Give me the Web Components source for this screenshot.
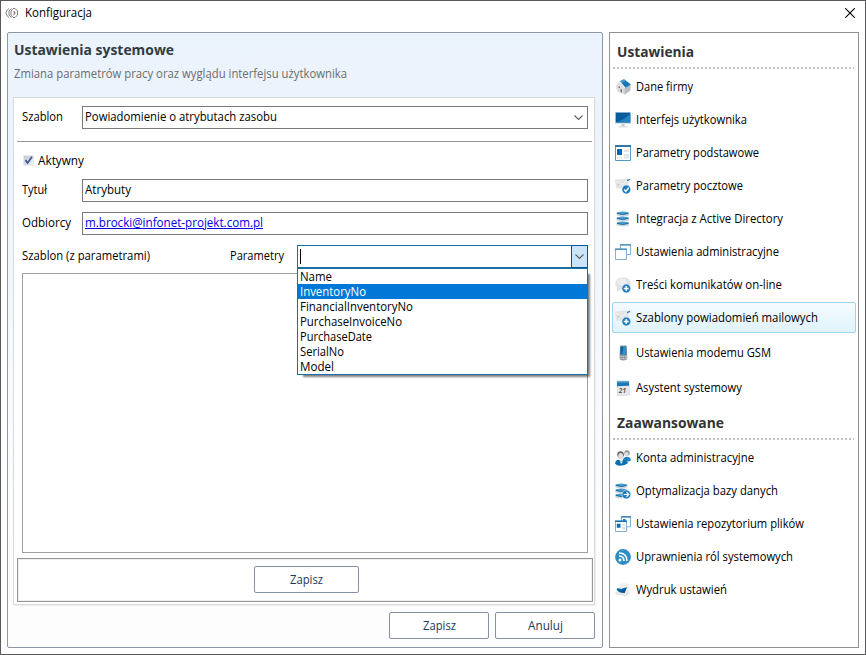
<!DOCTYPE html>
<html lang="pl">
<head>
<meta charset="utf-8">
<title>Konfiguracja</title>
<style>
    html, body {
        margin: 0;
        height: 100%;
        overflow: hidden;
    }
    body {
        --line: #7a7a7a;
        --accent: #0078d7;
        font-family: "Open Sans", "Noto Sans", sans-serif;
        font-size: 12px;
        color: #000;
    }
</style>
</head>
<body>
<config-window>
    <settings-panel></settings-panel>
    <side-menu>
        <menu-heading w="77">Ustawienia</menu-heading>
        <menu-item icon="house" w="57">Dane firmy</menu-item>
        <menu-item icon="monitor" w="111">Interfejs użytkownika</menu-item>
        <menu-item icon="form" w="123">Parametry podstawowe</menu-item>
        <menu-item icon="mailcheck" w="107">Parametry pocztowe</menu-item>
        <menu-item icon="database" w="147">Integracja z Active Directory</menu-item>
        <menu-item icon="windows" w="143">Ustawienia administracyjne</menu-item>
        <menu-item icon="chatadd" w="146">Treści komunikatów on-line</menu-item>
        <menu-item icon="mailadd" w="182" class="selected">Szablony powiadomień mailowych</menu-item>
        <menu-item icon="phone" w="135" class="tall">Ustawienia modemu GSM</menu-item>
        <menu-item icon="calendar" w="106" class="tall">Asystent systemowy</menu-item>
        <menu-heading w="107">Zaawansowane</menu-heading>
        <menu-item icon="users" w="118">Konta administracyjne</menu-item>
        <menu-item icon="dbnext" w="142">Optymalizacja bazy danych</menu-item>
        <menu-item icon="repo" w="168">Ustawienia repozytorium plików</menu-item>
        <menu-item icon="feed" w="157">Uprawnienia ról systemowych</menu-item>
        <menu-item icon="printer" w="91">Wydruk ustawień</menu-item>
    </side-menu>
</config-window>

<script>
const badge = '<circle cx="11.3" cy="11.5" r="4.4" fill="#1f7dbd" stroke="#eaf3f9" stroke-width=".6"/>'
const mail = '<path d="M0 1.500l13-1 1 10H1z" fill="#e4e4e6"/><path d="M1 3l6 3.500 5-4.500" fill="none" stroke="#f4f4f4"/><path d="M2.500 7l2-1" stroke="#c2c2c6"/><path d="M12 2.700l3-1.300" stroke="#3d7daa" stroke-width="1.400"/>'
const disks = (x, w) => [0, 5, 10].map(y => `
    <path d="M${x} ${y + 1.5}v3q${w / 2} 2.200 ${w} 0v-3z" fill="#d3d7da"/>
    <ellipse cx="${x + w / 2}" cy="${y + 2}" rx="${w / 2 - .3}" ry="1.5" fill="#4b9fcd"/>
    <path d="M${x + .5} ${y + 2.4}q${w / 2 - .5} 2.2 ${w - 1} 0" fill="none" stroke="#136ba6" stroke-width="1"/>`).join('')

const icons = {
    house: '<path d="M1 6.500L4.700 2.500 10 8v7.800L2 12.300z" fill="#dcdcdc"/><path d="M9.500 8.500l4.300-3 1.700 1v5L9.500 15.800z" fill="#b9bdc0"/><path d="M4.500 2.500L9 .2l7 5.300-6 3.500z" fill="#1a75b5"/><path d="M4.500 2.500L9 .2l2 1.500-4.800 2.600z" fill="#4a9bcc"/><path d="M.3 7l4.200-4.300L10 9" fill="none" stroke="#efefef" stroke-width="1.200"/><path d="M3.500 7.500h1.500v1.500H3.500zM5.500 10l1.500.6v2.900l-1.500-.6z" fill="#777"/>',
    monitor: '<path d="M0 0h16v12H0z" fill="#dde2e6"/><path d="M.7.6h14.600v10H.7z" fill="#095d9e"/><path d="M.7 10.600C6 9 11 6 15.300 2v8.600z" fill="#2583bf"/><path d="M6.500 12h3v2h-3z" fill="#c8cbcd"/><path d="M4 14h8l1 1.400H3z" fill="#dcdfe1"/>',
    form: '<path d="M.5.8h15v14.700H.5z" fill="#fff" stroke="#5499bf"/><path d="M0 0h16v2H0z" fill="#3179a6"/><path d="M2 4h5v6H2z" fill="#0a67ad"/><path d="M9 4.500h5V7H9zM9 9h5v4.500H9zM2 12h5v1.600H2z" fill="#e4e6e7"/>',
    mailcheck: mail + badge + '<path d="M9.200 11.500l1.600 1.900 2.900-3.600" fill="none" stroke="#fff" stroke-width="1.400"/>',
    mailadd: mail + badge + '<path d="M8.800 11.500h5M11.300 9v5" stroke="#fff" stroke-width="1.600"/>',
    chatadd: '<ellipse cx="8" cy="6.500" rx="7.700" ry="6.200" fill="#e2e2e4"/><ellipse cx="7" cy="5" rx="5" ry="3.500" fill="#ededee"/><path d="M2 10v4.500l5-2.500z" fill="#dedee0"/>' + badge + '<path d="M8.800 11.500h5M11.300 9v5" stroke="#fff" stroke-width="1.600"/>',
    database: disks(1.5, 12.5),
    dbnext: disks(.3, 12) + badge + '<path d="M8.600 11.500h5M11.500 9.200l2.200 2.300-2.200 2.300" fill="none" stroke="#fff" stroke-width="1.200"/>',
    windows: '<path d="M5.500.8h10v9.700h-10z" fill="#fff" stroke="#7fb2d0"/><path d="M5 .3h11v1.200H5z" fill="#3b86b2"/><path d="M.5 5.300h11v10.200H.5z" fill="#fff" stroke="#7fb2d0"/><path d="M0 4.500h12v1.300H0z" fill="#3b86b2"/>',
    repo: '<path d="M6.500.8h9v10h-9z" fill="#fff" stroke="#7fb2d0"/><path d="M6 .3h10v1.300H6zM8 3h2.500v3H8z" fill="#2578ac"/><path d="M.5 5.300h11v10.200H.5z" fill="#fff" stroke="#7fb2d0"/><path d="M0 4.500h12v1.400H0zM1.800 7.700h3.700v4H1.800z" fill="#116fae"/><path d="M7 8h3v1.500H7zM7 11h3v2.500H7z" fill="#dfe3e5"/>',
    phone: '<path d="M5 .5h6.500l.8 13q-.3 1.800-4 2-3.500-.2-3.800-2z" fill="#969a9d"/><path d="M5.500 1.500h5.700l.3 8H5.300z" fill="#0b65a5"/><path d="M8.500 1.500h2.700l.3 8H7z" fill="#3a8ec3"/><path d="M5.500 11h6v3h-6z" fill="#c2c5c8"/><path d="M7 11v3M9.500 11v3M5.500 12.500h6" stroke="#888" stroke-width=".6"/>',
    calendar: '<path d="M2 1h12l.5 14-12 .5z" fill="#e9e9ea" stroke="#ccc" stroke-width=".6"/><path d="M2 1h12v4.700L2 6.200z" fill="#1a78b8"/><path d="M2 1h12v1.500H2z" fill="#62a8d3"/><text x="3.800" y="12.500" font-family="Open Sans" font-style="italic" font-weight="700" font-size="6.500" fill="#555">21</text>',
    users: '<circle cx="12" cy="3" r="2.700" fill="#8b9499"/><circle cx="11.600" cy="4" r="1.900" fill="#dedede"/><path d="M8 10q1-3.500 4-3.300 3.500 0 4 3.800-3 2-8 0z" fill="#2481bb"/><path d="M2.200 5Q2 1.300 5.500 1.200 9 1 9 5L7.800 8H3.500z" fill="#5f686d"/><ellipse cx="5.700" cy="6.300" rx="2.400" ry="3.200" fill="#dfdddc"/><path d="M0 13.500q.5-4 4-3.800l2 1.800 2-1.800q4 .2 5 3.300-3 2.800-8 2.700-3.500 0-5-2.200z" fill="#0870af"/><path d="M4.500 9.800L6 12l1.500-2.200v2.700L6 14z" fill="#d7e5ee"/>',
    feed: '<circle cx="8" cy="8" r="7.900" fill="#318cc3"/><circle cx="5" cy="11" r="1.500" fill="#fff"/><path d="M4 7q4.800.1 5 5M4 4q7.800 0 8 8" fill="none" stroke="#fff" stroke-width="1.600"/>',
    printer: '<path d="M5 1.500h8l2.500 6-3 4H3z" fill="#f0f0f1"/><path d="M0 10.500L4 9l10 1 1.500 2L11 14.500 1 12.500z" fill="#e6e6e8"/><path d="M2 6.500q2-.500 4 .5 3-1.800 6-1.500L9.500 11 4 10 1.700 8z" fill="#0d6cae"/><path d="M4 10q4-2 7.500-4.300L9.500 11z" fill="#08568f"/>',
    logo: '<path d="M4 1.500L2.300 3 .8 6l1.500 3L4 10.500M6.500 1.500L4 4v4l2.500 2.500M8 1.500h2L12.500 4v4L10 10.500H8M7.500 2L6 4v4l1.500 2" fill="none" stroke="#827c80" stroke-width="1"/><path d="M8.500 4.200L10 6 8.500 7.800" fill="none" stroke="#a5536d" stroke-width="1.100"/>'
}

/* text run condensed to a given pixel width */
class FitText extends HTMLElement {
    constructor() {
        super()
        this.attachShadow({ mode: 'open' })
    }
    connectedCallback() {
        this.shadowRoot.innerHTML = `
            <style>
                :host { display: block; flex: none; white-space: nowrap; }
                span { display: inline-block; transform-origin: 0 50%; }
            </style>
            <span><slot></slot></span>
        `
        const w = Number(this.getAttribute('w'))
        if (!w) return
        const span = this.shadowRoot.querySelector('span')
        const natural = span.getBoundingClientRect().width
        span.style.transform = `scaleX(${w / natural})`
        this.style.width = w + 'px'
    }
}

class AppIcon extends HTMLElement {
    constructor() {
        super()
        this.attachShadow({ mode: 'open' })
    }
    connectedCallback() {
        this.shadowRoot.innerHTML = `
            <style>
                :host { display: block; flex: none; width: 16px; height: 16px; }
                svg { display: block; }
            </style>
            <svg width="16" height="16" viewBox="0 0 16 16">${icons[this.getAttribute('name')]}</svg>
        `
    }
}

class ConfigWindow extends HTMLElement {
    constructor() {
        super()
        this.attachShadow({ mode: 'open' })
        this.shadowRoot.innerHTML = `
            <style>
                :host {
                    display: flex;
                    flex-direction: column;
                    box-sizing: border-box;
                    width: 866px;
                    height: 655px;
                    border: 1px solid #58585b;
                    background: #fff;
                }
                header {
                    display: flex;
                    align-items: center;
                    box-sizing: border-box;
                    height: 24px;
                    padding: 0 10px 1px 4px;
                    margin-bottom: 7px;
                }
                header app-icon { margin: 5px 4px 0 0; }
                .close { margin: 1px 0 0 auto; }
                main {
                    display: flex;
                    gap: 6px;
                    height: 616px;
                    padding-left: 6px;
                }
            </style>
            <header>
                <app-icon name="logo"></app-icon>
                <fit-text w="67">Konfiguracja</fit-text>
                <svg class="close" width="10" height="10"><path d="M.3.300l9.400 9.400M9.700.300L.3 9.700" stroke="#000" stroke-width="1.100"/></svg>
            </header>
            <main><slot></slot></main>
        `
    }
}

class PushButton extends HTMLElement {
    constructor() {
        super()
        this.attachShadow({ mode: 'open' })
        this.shadowRoot.innerHTML = `
            <style>
                :host {
                    display: flex;
                    align-items: center;
                    justify-content: center;
                    box-sizing: border-box;
                    width: 100px;
                    height: 27px;
                    border: 1px solid #8392a8;
                    border-radius: 2px;
                    background: #fff;
                    color: #1e395b;
                }
            </style>
            <slot></slot>
        `
    }
}

class TextField extends HTMLElement {
    constructor() {
        super()
        this.attachShadow({ mode: 'open' })
        const combo = this.hasAttribute('combo')
        this.shadowRoot.innerHTML = `
            <style>
                :host {
                    display: flex;
                    align-items: center;
                    justify-content: space-between;
                    box-sizing: border-box;
                    height: 23px;
                    padding-left: 2px;
                    border: 1px solid var(--line);
                    background: #fff;
                }
                :host([open]) { border-color: #1a6fa8; }
                ::slotted(fit-text) { margin-top: -2px; }
                .arrow {
                    display: flex;
                    align-items: center;
                    justify-content: center;
                    width: 17px;
                    height: 23px;
                    box-sizing: border-box;
                }
                :host([open]) .arrow {
                    background: #cce4f7;
                    border: 1px solid #005499;
                    margin-right: -1px;
                }
            </style>
            <slot></slot>
            ${combo ? '<div class="arrow"><svg width="9" height="6"><path d="M.5.500l4 4 4-4" fill="none" stroke="#606060" stroke-width="1.100"/></svg></div>' : ''}
        `
    }
}

class DropList extends HTMLElement {
    constructor() {
        super()
        this.attachShadow({ mode: 'open' })
        this.shadowRoot.innerHTML = `
            <style>
                :host {
                    display: block;
                    box-sizing: border-box;
                    border: 1px solid #1a6fa8;
                    background: #fff;
                    box-shadow: 4px 4px 2px -2px rgba(0, 0, 0, .5);
                }
                ::slotted(fit-text) { padding-left: 2px; line-height: 15px; }
                ::slotted(.active) { background: var(--accent); color: #fff; }
                ::slotted(*) { width: auto !important; }
            </style>
            <slot></slot>
        `
    }
}

class SettingsPanel extends HTMLElement {
    constructor() {
        super()
        this.attachShadow({ mode: 'open' })
        this.shadowRoot.innerHTML = `
            <style>
                :host {
                    display: flex;
                    flex-direction: column;
                    box-sizing: border-box;
                    width: 596px;
                    border: 1px solid #8e97a5;
                    border-radius: 2px;
                    background: linear-gradient(#ebf3fd 0, #ecf3fc 90px, #fdfdfe 500px);
                    padding: 0 7px 0 5px;
                }
                .title { font-size: 15px; font-weight: 700; line-height: 20px; color: #333b40; margin: 6px 0 0 1px; }
                .subtitle { line-height: 16px; color: #6d6d6d; margin: 7px 0 0 1px; }
                .card {
                    display: flex;
                    flex-direction: column;
                    box-sizing: border-box;
                    height: 508px;
                    width: 582px;
                    margin-top: 15px;
                    padding: 8px 1px 2px 3px;
                    border: 1px solid #d9dadc;
                    background: #fff;
                    box-shadow: 1px 1px 0 #eeeeef;
                }
                .row {
                    display: flex;
                    align-items: center;
                    height: 23px;
                    padding: 0 5px;
                }
                .row > fit-text, .label { margin-top: -2px; }
                .label { width: 60px; flex: none; }
                text-field { flex: 1; }
                hr { width: 575px; height: 1px; margin: 12px 0 11px; border: 0; background: #969696; }
                .check { width: 11px; height: 11px; margin: -1px 4px 0 1px; background: linear-gradient(135deg, #c3c9d6, #eef1f6); border: 1px solid #e9ebf0; box-sizing: border-box; flex: none; }
                .check svg { display: block; }
                .active-row { height: 16px; margin-bottom: 10px; }
                .gap { margin-top: 10px; }
                a { color: #0000e0; text-decoration: underline; }
                .params { position: relative; width: 291px; margin-left: auto; }
                .params drop-list { position: absolute; top: 23px; left: 0; right: 0; z-index: 2; }
                .caret { width: 1px; height: 15px; background: #000; }
                .editor { height: 280px; box-sizing: border-box; border: 1px solid #a0a0a0; margin: 5px; flex: none; }
                .save-box {
                    display: flex;
                    align-items: flex-start;
                    justify-content: center;
                    box-sizing: border-box;
                    height: 44px;
                    border: 1px solid #969696;
                    box-shadow: inset 0 0 0 1px #f0f0f0;
                    padding: 7px 0 0 3px;
                    flex: none;
                }
                .save-box push-button { width: 105px; }
                footer { display: flex; justify-content: flex-end; gap: 6px; margin-top: 7px; }
            </style>
            <fit-text class="title" w="160">Ustawienia systemowe</fit-text>
            <fit-text class="subtitle" w="333">Zmiana parametrów pracy oraz wyglądu interfejsu użytkownika</fit-text>
            <section class="card">
                <div class="row">
                    <div class="label"><fit-text w="41">Szablon</fit-text></div>
                    <text-field combo><fit-text w="192">Powiadomienie o atrybutach zasobu</fit-text></text-field>
                </div>
                <hr>
                <div class="row active-row">
                    <span class="check"><svg width="9" height="9"><path d="M1.500 4l2 3L8 .700" fill="none" stroke="#3d5291" stroke-width="1.600"/></svg></span>
                    <fit-text w="46">Aktywny</fit-text>
                </div>
                <div class="row">
                    <div class="label"><fit-text w="25">Tytuł</fit-text></div>
                    <text-field><fit-text w="46">Atrybuty</fit-text></text-field>
                </div>
                <div class="row gap">
                    <div class="label"><fit-text w="49">Odbiorcy</fit-text></div>
                    <text-field><fit-text w="178"><a>m.brocki@infonet-projekt.com.pl</a></fit-text></text-field>
                </div>
                <div class="row gap">
                    <fit-text w="128">Szablon (z parametrami)</fit-text>
                    <fit-text w="54" style="margin-left: 80px">Parametry</fit-text>
                    <div class="params">
                        <text-field combo open><span class="caret"></span></text-field>
                        <drop-list>
                            <fit-text w="32">Name</fit-text>
                            <fit-text w="66" class="active">InventoryNo</fit-text>
                            <fit-text w="113">FinancialInventoryNo</fit-text>
                            <fit-text w="102">PurchaseInvoiceNo</fit-text>
                            <fit-text w="72">PurchaseDate</fit-text>
                            <fit-text w="44">SerialNo</fit-text>
                            <fit-text w="34">Model</fit-text>
                        </drop-list>
                    </div>
                </div>
                <div class="editor"></div>
                <div class="save-box"><push-button><fit-text w="33">Zapisz</fit-text></push-button></div>
            </section>
            <footer>
                <push-button><fit-text w="33">Zapisz</fit-text></push-button>
                <push-button><fit-text w="35">Anuluj</fit-text></push-button>
            </footer>
        `
    }
}

class SideMenu extends HTMLElement {
    constructor() {
        super()
        this.attachShadow({ mode: 'open' })
        this.shadowRoot.innerHTML = `
            <style>
                :host {
                    display: flex;
                    flex-direction: column;
                    box-sizing: border-box;
                    width: 250px;
                    border: 1px solid #929296;
                    background: #fff;
                    padding: 1px 2px;
                }
            </style>
            <slot></slot>
        `
    }
}

class MenuHeading extends HTMLElement {
    constructor() {
        super()
        this.attachShadow({ mode: 'open' })
        this.shadowRoot.innerHTML = `
            <style>
                :host {
                    display: block;
                    box-sizing: border-box;
                    height: 36px;
                    padding: 7px 2px 0 1px;
                    font-size: 15px;
                    font-weight: 700;
                    line-height: 20px;
                    color: #333;
                }
                fit-text { padding-left: 4px; }
                .dots { height: 2px; margin-top: 6px; background: repeating-linear-gradient(90deg, #c3c3c3 0 2px, transparent 2px 4px); }
            </style>
            <fit-text w="${this.getAttribute('w')}">${this.textContent}</fit-text>
            <div class="dots"></div>
        `
    }
}

class MenuItem extends HTMLElement {
    constructor() {
        super()
        this.attachShadow({ mode: 'open' })
        this.shadowRoot.innerHTML = `
            <style>
                :host {
                    display: flex;
                    align-items: center;
                    box-sizing: border-box;
                    height: 33px;
                    padding-left: 3px;
                    gap: 5px;
                    flex: none;
                }
                :host(.selected) {
                    height: 31px;
                    margin: 1px 0;
                    padding-left: 2px;
                    border: 1px solid #99d6e9;
                    border-radius: 2px;
                    background: linear-gradient(#f5fbfe, #e0f3fc);
                }
                :host(.tall) { height: 35px; }
                :host(.selected) + * { margin-top: 1px; }
            </style>
            <app-icon name="${this.getAttribute('icon')}"></app-icon>
            <fit-text w="${this.getAttribute('w')}">${this.textContent}</fit-text>
        `
        if (this.classList.contains('selected')) this.style.marginBottom = '2px'
    }
}

customElements.define('config-window', ConfigWindow)
customElements.define('settings-panel', SettingsPanel)
customElements.define('push-button', PushButton)
customElements.define('text-field', TextField)
customElements.define('drop-list', DropList)
customElements.define('side-menu', SideMenu)
customElements.define('menu-heading', MenuHeading)
customElements.define('menu-item', MenuItem)
customElements.define('app-icon', AppIcon)
customElements.define('fit-text', FitText)
</script>
</body>
</html>
